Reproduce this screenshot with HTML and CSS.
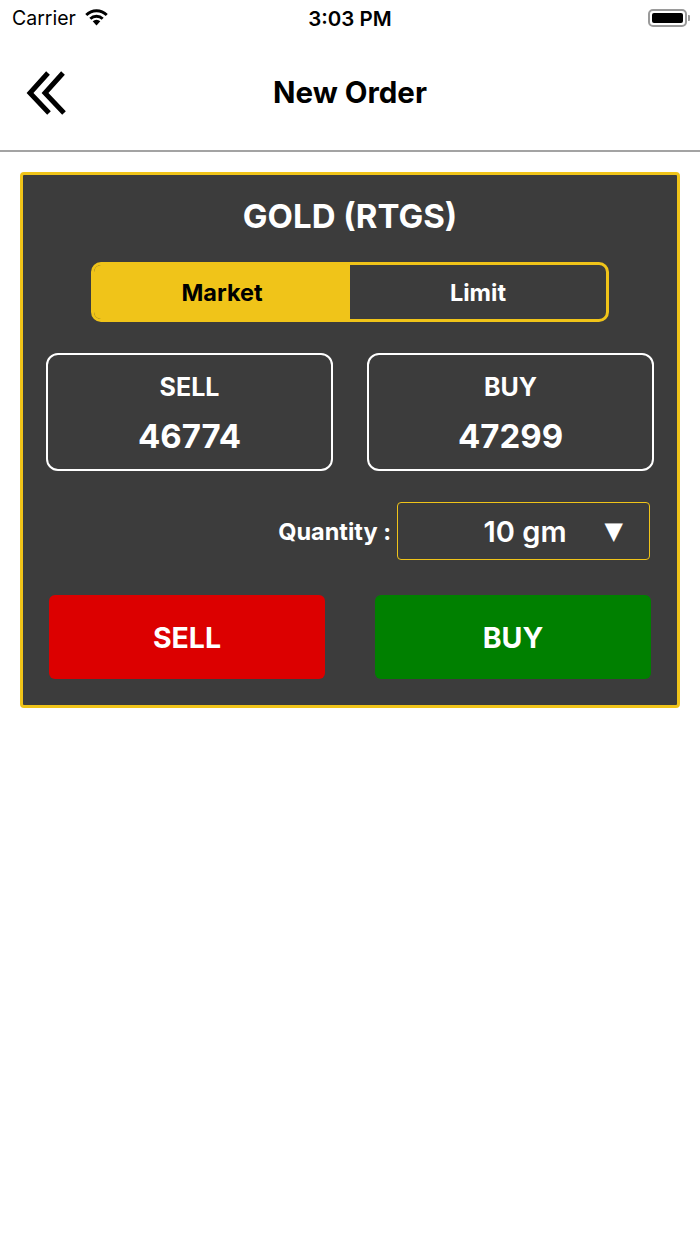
FILE: index.html
```html
<!DOCTYPE html>
<html lang="en">
<head>
  <meta charset="UTF-8" />
  <meta name="viewport" content="width=device-width, initial-scale=1.0"/>
  <title>New Order</title>
  <link rel="stylesheet" href="styles.css">
</head>
<body>
  <div class="status-bar">
    <div class="status-left">
      <span>Carrier</span>
      <svg class="wifi" width="25" height="18" viewBox="0 0 22 16">
        <path d="M11 15.5 L7.6 11.8 A5 5 0 0 1 14.4 11.8 Z" fill="#000"/>
        <path d="M4.6 8.6 A9.2 9.2 0 0 1 17.4 8.6 L15.6 10.5 A6.6 6.6 0 0 0 6.4 10.5 Z" fill="#000"/>
        <path d="M1 5.3 A14 14 0 0 1 21 5.3 L19.2 7.2 A11.4 11.4 0 0 0 2.8 7.2 Z" fill="#000"/>
      </svg>
    </div>
    <div class="status-time">3:03 PM</div>
    <div class="status-right">
      <span class="battery"><span class="battery-fill"></span></span>
      <span class="battery-tip"></span>
    </div>
  </div>

  <header class="nav">
    <a class="back" href="#">
      <svg width="42" height="46" viewBox="0 0 42 46">
        <polyline points="23,3 5,23 24,43" fill="none" stroke="#000" stroke-width="5"/>
        <polyline points="38,3 20,23 39,43" fill="none" stroke="#000" stroke-width="5"/>
      </svg>
    </a>
    <h1>New Order</h1>
  </header>

  <main class="card">
    <h2 class="card-title">GOLD (RTGS)</h2>

    <div class="segment">
      <div class="segment-item active">Market</div>
      <div class="segment-item">Limit</div>
    </div>

    <div class="prices">
      <div class="price-box">
        <div class="price-label">SELL</div>
        <div class="price-value">46774</div>
      </div>
      <div class="price-box">
        <div class="price-label">BUY</div>
        <div class="price-value">47299</div>
      </div>
    </div>

    <div class="quantity">
      <span class="quantity-label">Quantity :</span>
      <div class="dropdown">
        <span class="dropdown-value">10 gm</span>
        <span class="dropdown-arrow">&#9660;</span>
      </div>
    </div>

    <div class="actions">
      <button class="btn btn-sell">SELL</button>
      <button class="btn btn-buy">BUY</button>
    </div>
  </main>
</body>
</html>
```

FILE: styles.css
```css
* { box-sizing: border-box; }

body, html {
  margin: 0;
  padding: 0;
  font-family: Inter, "Liberation Sans", sans-serif;
  background: #fff;
  color: #000;
}

.status-bar {
  height: 36px;
  display: flex;
  align-items: center;
  justify-content: space-between;
  padding: 0 10px 0 12px;
  position: relative;
}

.status-left {
  display: flex;
  align-items: center;
  gap: 8px;
  font-size: 19.5px;
}

.wifi { margin-top: -3px; }

.status-time {
  position: absolute;
  left: 0;
  right: 0;
  text-align: center;
  font-size: 20.5px;
  font-weight: 600;
  pointer-events: none;
}

.status-right {
  display: flex;
  align-items: center;
}

.battery {
  width: 39px;
  height: 18px;
  border: 2px solid #9a9a9a;
  border-radius: 5px;
  padding: 2px;
  display: flex;
}

.battery-fill {
  flex: 1;
  background: #000;
  border-radius: 2px;
}

.battery-tip {
  width: 2px;
  height: 6px;
  background: #9a9a9a;
  margin-left: 1px;
  border-radius: 0 1px 1px 0;
}

.nav {
  height: 116px;
  border-bottom: 2px solid #a3a3a3;
  display: flex;
  align-items: center;
  justify-content: center;
  position: relative;
}

.nav h1 {
  margin: 0 0 2px;
  font-size: 29.5px;
  font-weight: 700;
}

.back {
  position: absolute;
  left: 25px;
  top: 34px;
  display: block;
  line-height: 0;
}

.card {
  margin: 20px 20px 0;
  background: #3c3c3c;
  border: 3px solid #f0c419;
  border-radius: 4px;
  padding: 22px 23px 26px;
  color: #fff;
}

.card-title {
  margin: 0;
  text-align: center;
  font-size: 33px;
  line-height: 38px;
  font-weight: 700;
}

.segment {
  width: 518px;
  height: 60px;
  margin: 27px auto 0;
  border: 3px solid #f0c419;
  border-radius: 10px;
  overflow: hidden;
  display: flex;
}

.segment-item {
  flex: 1;
  display: flex;
  align-items: center;
  justify-content: center;
  font-size: 23.5px;
  font-weight: 700;
}

.segment-item.active {
  background: #f0c419;
  color: #000;
}

.prices {
  margin-top: 31px;
  display: grid;
  grid-template-columns: 1fr 1fr;
  gap: 34px;
}

.price-box {
  height: 118px;
  border: 2px solid #fff;
  border-radius: 12px;
  display: flex;
  flex-direction: column;
  align-items: center;
  justify-content: center;
  gap: 16px;
  padding-top: 4px;
}

.price-label {
  font-size: 25px;
  line-height: 28px;
  font-weight: 700;
}

.price-value {
  font-size: 33px;
  line-height: 38px;
  font-weight: 700;
}

.quantity {
  margin-top: 31px;
  display: flex;
  justify-content: flex-end;
  align-items: center;
  gap: 6px;
  padding-right: 4px;
}

.quantity-label {
  font-size: 23.5px;
  font-weight: 700;
}

.dropdown {
  width: 253px;
  height: 58px;
  border: 1px solid #f0c419;
  border-radius: 4px;
  display: flex;
  align-items: center;
  justify-content: flex-end;
  padding-right: 26px;
  gap: 38px;
}

.dropdown-value {
  font-size: 29px;
  font-weight: 600;
}

.dropdown-arrow {
  font-size: 24px;
  font-family: "DejaVu Sans", sans-serif;
}

.actions {
  margin-top: 35px;
  display: grid;
  grid-template-columns: 276px 276px;
  justify-content: space-between;
  padding: 0 3px;
}

.btn {
  height: 84px;
  border: none;
  border-radius: 6px;
  color: #fff;
  font-family: Inter, "Liberation Sans", sans-serif;
  font-size: 28.5px;
  font-weight: 700;
}

.btn-sell { background: #dc0000; }
.btn-buy { background: #008000; }
```
